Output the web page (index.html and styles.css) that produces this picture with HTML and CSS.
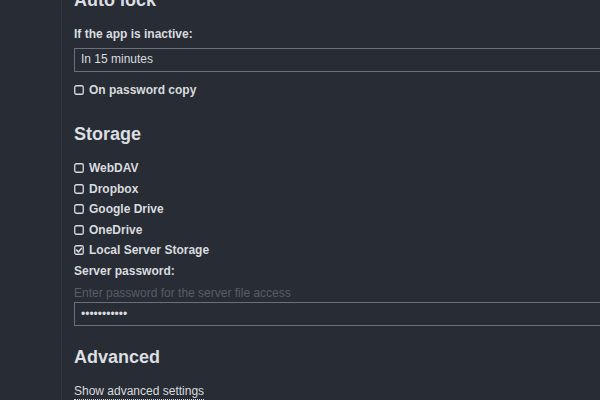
FILE: index.html
```html
<!DOCTYPE html>
<html>
<head>
<meta charset="utf-8">
<link rel="stylesheet" href="styles.css">
</head>
<body>
<div class="app">
  <aside class="sidebar"></aside>
  <main class="content">
    <h2 class="heading first">Auto lock</h2>
    <label class="label">If the app is inactive:</label>
    <div class="field"><span class="field-text">In 15 minutes</span></div>
    <div class="check first-check">
      <svg class="box" viewBox="0 0 10 10"><rect x="0.75" y="0.75" width="8.5" height="8.5" rx="1.6"/></svg>
      <span>On password copy</span>
    </div>

    <h2 class="heading section">Storage</h2>
    <div class="checks">
      <div class="check"><svg class="box" viewBox="0 0 10 10"><rect x="0.75" y="0.75" width="8.5" height="8.5" rx="1.6"/></svg><span>WebDAV</span></div>
      <div class="check"><svg class="box" viewBox="0 0 10 10"><rect x="0.75" y="0.75" width="8.5" height="8.5" rx="1.6"/></svg><span>Dropbox</span></div>
      <div class="check"><svg class="box" viewBox="0 0 10 10"><rect x="0.75" y="0.75" width="8.5" height="8.5" rx="1.6"/></svg><span>Google Drive</span></div>
      <div class="check"><svg class="box" viewBox="0 0 10 10"><rect x="0.75" y="0.75" width="8.5" height="8.5" rx="1.6"/></svg><span>OneDrive</span></div>
      <div class="check"><svg class="box" viewBox="0 0 10 10"><rect x="0.75" y="0.75" width="8.5" height="8.5" rx="1.6"/><path class="tick" d="M2.6 5.1 L4.4 6.9 L7.6 3.2"/></svg><span>Local Server Storage</span></div>
      <label class="label tight">Server password:</label>
      <div class="hint">Enter password for the server file access</div>
    </div>
    <div class="field"><input class="pw" type="password" value="abcdefghijk" readonly></div>

    <h2 class="heading section2">Advanced</h2>
    <a class="link">Show advanced settings</a>
  </main>
</div>
</body>
</html>
```

FILE: styles.css
```css
html, body {
  margin: 0;
  padding: 0;
  background: #282c35;
  width: 600px;
  height: 400px;
  overflow: hidden;
}
body {
  font-family: "Liberation Sans", Arial, sans-serif;
  color: #d9dbdf;
  font-size: 12px;
}
.app {
  display: flex;
  height: 400px;
}
.sidebar {
  width: 61px;
  flex: none;
  border-right: 1px solid #343842;
  background: #282c35;
}
.content {
  flex: 1;
  padding-left: 12px;
  display: flex;
  flex-direction: column;
  align-items: flex-start;
  min-width: 0;
}
.heading {
  font-size: 18px;
  line-height: 24px;
  font-weight: bold;
  margin: 0;
  color: #dcdee2;
}
.heading.first {
  margin-top: -12px;
}
.label {
  display: block;
  font-weight: bold;
  line-height: 16px;
  margin-top: 14px;
}
.label.tight {
  margin-top: 0;
  line-height: 20.5px;
}
.field {
  box-sizing: border-box;
  width: 560px;
  height: 24px;
  border: 1px solid #6c7079;
  margin-top: 6px;
  display: flex;
  align-items: center;
  padding: 0 6px;
  flex: none;
}
.field-text {
  line-height: 20px;
  margin-top: -2px;
}
.check {
  display: flex;
  align-items: center;
  gap: 5px;
  font-weight: bold;
  line-height: 20.5px;
}
.first-check {
  line-height: 16px;
  margin-top: 10px;
}
.box {
  width: 10px;
  height: 10px;
  flex: none;
  fill: none;
  stroke: #d9dbdf;
  stroke-width: 1.3;
}
.tick {
  stroke-width: 1.5;
  stroke-linecap: round;
  stroke-linejoin: round;
}
.heading.section {
  margin-top: 24px;
}
.checks {
  display: flex;
  flex-direction: column;
  margin-top: 12px;
}
.hint {
  color: #585d66;
  line-height: 20.5px;
  margin-top: 2px;
}
.checks + .field {
  margin-top: -2px;
}
.pw {
  background: transparent;
  border: none;
  outline: none;
  padding: 0;
  margin: 0;
  color: #d9dbdf;
  font-family: "Liberation Sans", Arial, sans-serif;
  font-size: 12px;
  width: 100%;
  line-height: 20px;
}
.heading.section2 {
  margin-top: 19px;
}
.link {
  margin-top: 15px;
  line-height: 15px;
  border-bottom: 1px dotted #d9dbdf;
  color: #d9dbdf;
}
```
